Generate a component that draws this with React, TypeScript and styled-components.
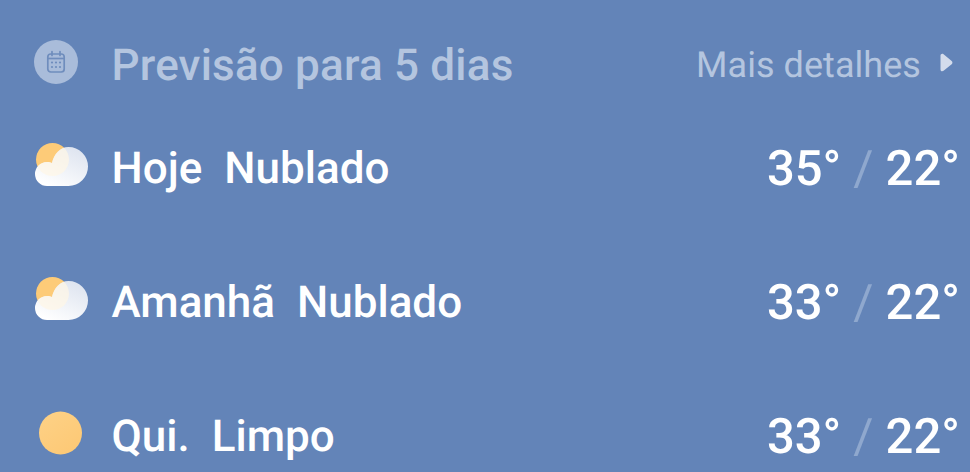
import styled, { createGlobalStyle } from 'styled-components';

interface Day {
  label: string;
  condition: string;
  high: number;
  low: number;
  icon: 'cloud' | 'sun';
}

const DAYS: Day[] = [
  { label: 'Hoje', condition: 'Nublado', high: 35, low: 22, icon: 'cloud' },
  { label: 'Amanhã', condition: 'Nublado', high: 33, low: 22, icon: 'cloud' },
  { label: 'Qui.', condition: 'Limpo', high: 33, low: 22, icon: 'sun' }
];

const GlobalStyle = createGlobalStyle`
  html, body {
    margin: 0;
    background-color: #6384b8;
  }
`;

const Page = styled.div`
  width: 970px;
  height: 472px;
  overflow: hidden;
  box-sizing: border-box;
  padding: 29px 10px 0 34px;
  background-color: #6384b8;
  font-family: Roboto, "Liberation Sans", sans-serif;
  text-rendering: geometricPrecision;
  color: #fff;
`;

const Header = styled.div`
  display: flex;
  align-items: center;
  height: 72px;
`;

const IconSlot = styled.div`
  flex: none;
  width: 77.5px;
  display: flex;
  align-items: center;
`;

const CalendarBadge = styled.div`
  width: 44px;
  height: 44px;
  margin-bottom: 6px;
  border-radius: 50%;
  background-color: #a9bcda;
  display: flex;
  align-items: center;
  justify-content: center;
`;

const Title = styled.div`
  flex: 1;
  font-weight: 500;
  font-size: 44px;
  letter-spacing: 0.2px;
  color: #b4c5df;
`;

const More = styled.div`
  display: flex;
  align-items: center;
  gap: 19px;
  padding-right: 7px;
  font-size: 36px;
  letter-spacing: 0.05px;
  color: #b4c5df;
`;

const Caret = styled.svg`
  display: block;
  margin-bottom: 5px;
`;

const Row = styled.div`
  display: flex;
  align-items: center;
  height: 134px;
`;

const RowIcon = styled.svg`
  display: block;
  margin-bottom: 6px;
`;

const RowText = styled.div`
  flex: 1;
  display: flex;
  gap: 22px;
  font-weight: 500;
  font-size: 44px;
`;

const Temps = styled.div`
  display: flex;
  gap: 12px;
  font-weight: 500;
  font-size: 49px;
`;

const Slash = styled.span`
  font-weight: 400;
  color: #8fa8ce;
`;

function CalendarIcon() {
  return (
    <svg width="24" height="24" viewBox="0 0 24 24" fill="none">
      <rect x="3.8" y="4" width="16.4" height="18" rx="3" stroke="#6f8dbd" strokeWidth="1.7" />
      <path d="M4 8.5h16" stroke="#6f8dbd" strokeWidth="1.7" />
      <path d="M8 1.5v4M16 1.5v4" stroke="#6f8dbd" strokeWidth="1.7" strokeLinecap="round" />
      {[8, 12, 16].map(x =>
        [12.5, 17].map(y => <circle key={`${x}-${y}`} cx={x} cy={y} r="1.1" fill="#6f8dbd" />)
      )}
    </svg>
  );
}

function CaretIcon() {
  return (
    <Caret width="13" height="19" viewBox="0.5 0.8 12.8 18.4">
      <path d="M1 3.2C1 1.5 2.7.8 4 1.8l8 6.6c1 .8 1 2.4 0 3.2l-8 6.6c-1.300 1-3 .3-3-1.400z" fill="#d3dcec" />
    </Caret>
  );
}

const CLOUD_PATH =
  'M13 43A12 12 0 0 1 13 19C15 19 17 19.5 18 20C20 11 26 4 34.5 4A19.5 19.5 0 0 1 34.5 43Z';

function CloudIcon({ id }: { id: string }) {
  return (
    <RowIcon width="54" height="44" viewBox="0 0 54 44">
      <defs>
        <linearGradient id={`${id}-fill`} x1="0.85" y1="0.1" x2="0.25" y2="1">
          <stop offset="0" stopColor="#dfe5f0" />
          <stop offset="1" stopColor="#ffffff" />
        </linearGradient>
        <clipPath id={`${id}-clip`}>
          <path d={CLOUD_PATH} />
        </clipPath>
      </defs>
      <circle cx="18.5" cy="16.5" r="16.5" fill="#fdcb78" />
      <path d={CLOUD_PATH} fill={`url(#${id}-fill)`} />
      <circle cx="18.5" cy="16.5" r="16.5" fill="#fff7e6" opacity="0.7" clipPath={`url(#${id}-clip)`} />
    </RowIcon>
  );
}

function SunIcon() {
  return (
    <RowIcon width="54" height="44" viewBox="0 0 54 44">
      <defs>
        <linearGradient id="sun-fill" x1="0.2" y1="0.1" x2="0.8" y2="0.9">
          <stop offset="0" stopColor="#fdd084" />
          <stop offset="1" stopColor="#fdc976" />
        </linearGradient>
      </defs>
      <circle cx="26.5" cy="22" r="21.5" fill="url(#sun-fill)" />
    </RowIcon>
  );
}

function App() {
  return (
    <Page>
      <GlobalStyle />
      <Header>
        <IconSlot>
          <CalendarBadge>
            <CalendarIcon />
          </CalendarBadge>
        </IconSlot>
        <Title>Previsão para 5 dias</Title>
        <More>
          Mais detalhes
          <CaretIcon />
        </More>
      </Header>
      {DAYS.map(day => (
        <Row key={day.label}>
          <IconSlot>
            {day.icon === 'cloud' ? <CloudIcon id={`cloud-${day.label}`} /> : <SunIcon />}
          </IconSlot>
          <RowText>
            <span>{day.label}</span>
            <span>{day.condition}</span>
          </RowText>
          <Temps>
            <span>{day.high}°</span>
            <Slash>/</Slash>
            <span>{day.low}°</span>
          </Temps>
        </Row>
      ))}
    </Page>
  );
}

export default App;
